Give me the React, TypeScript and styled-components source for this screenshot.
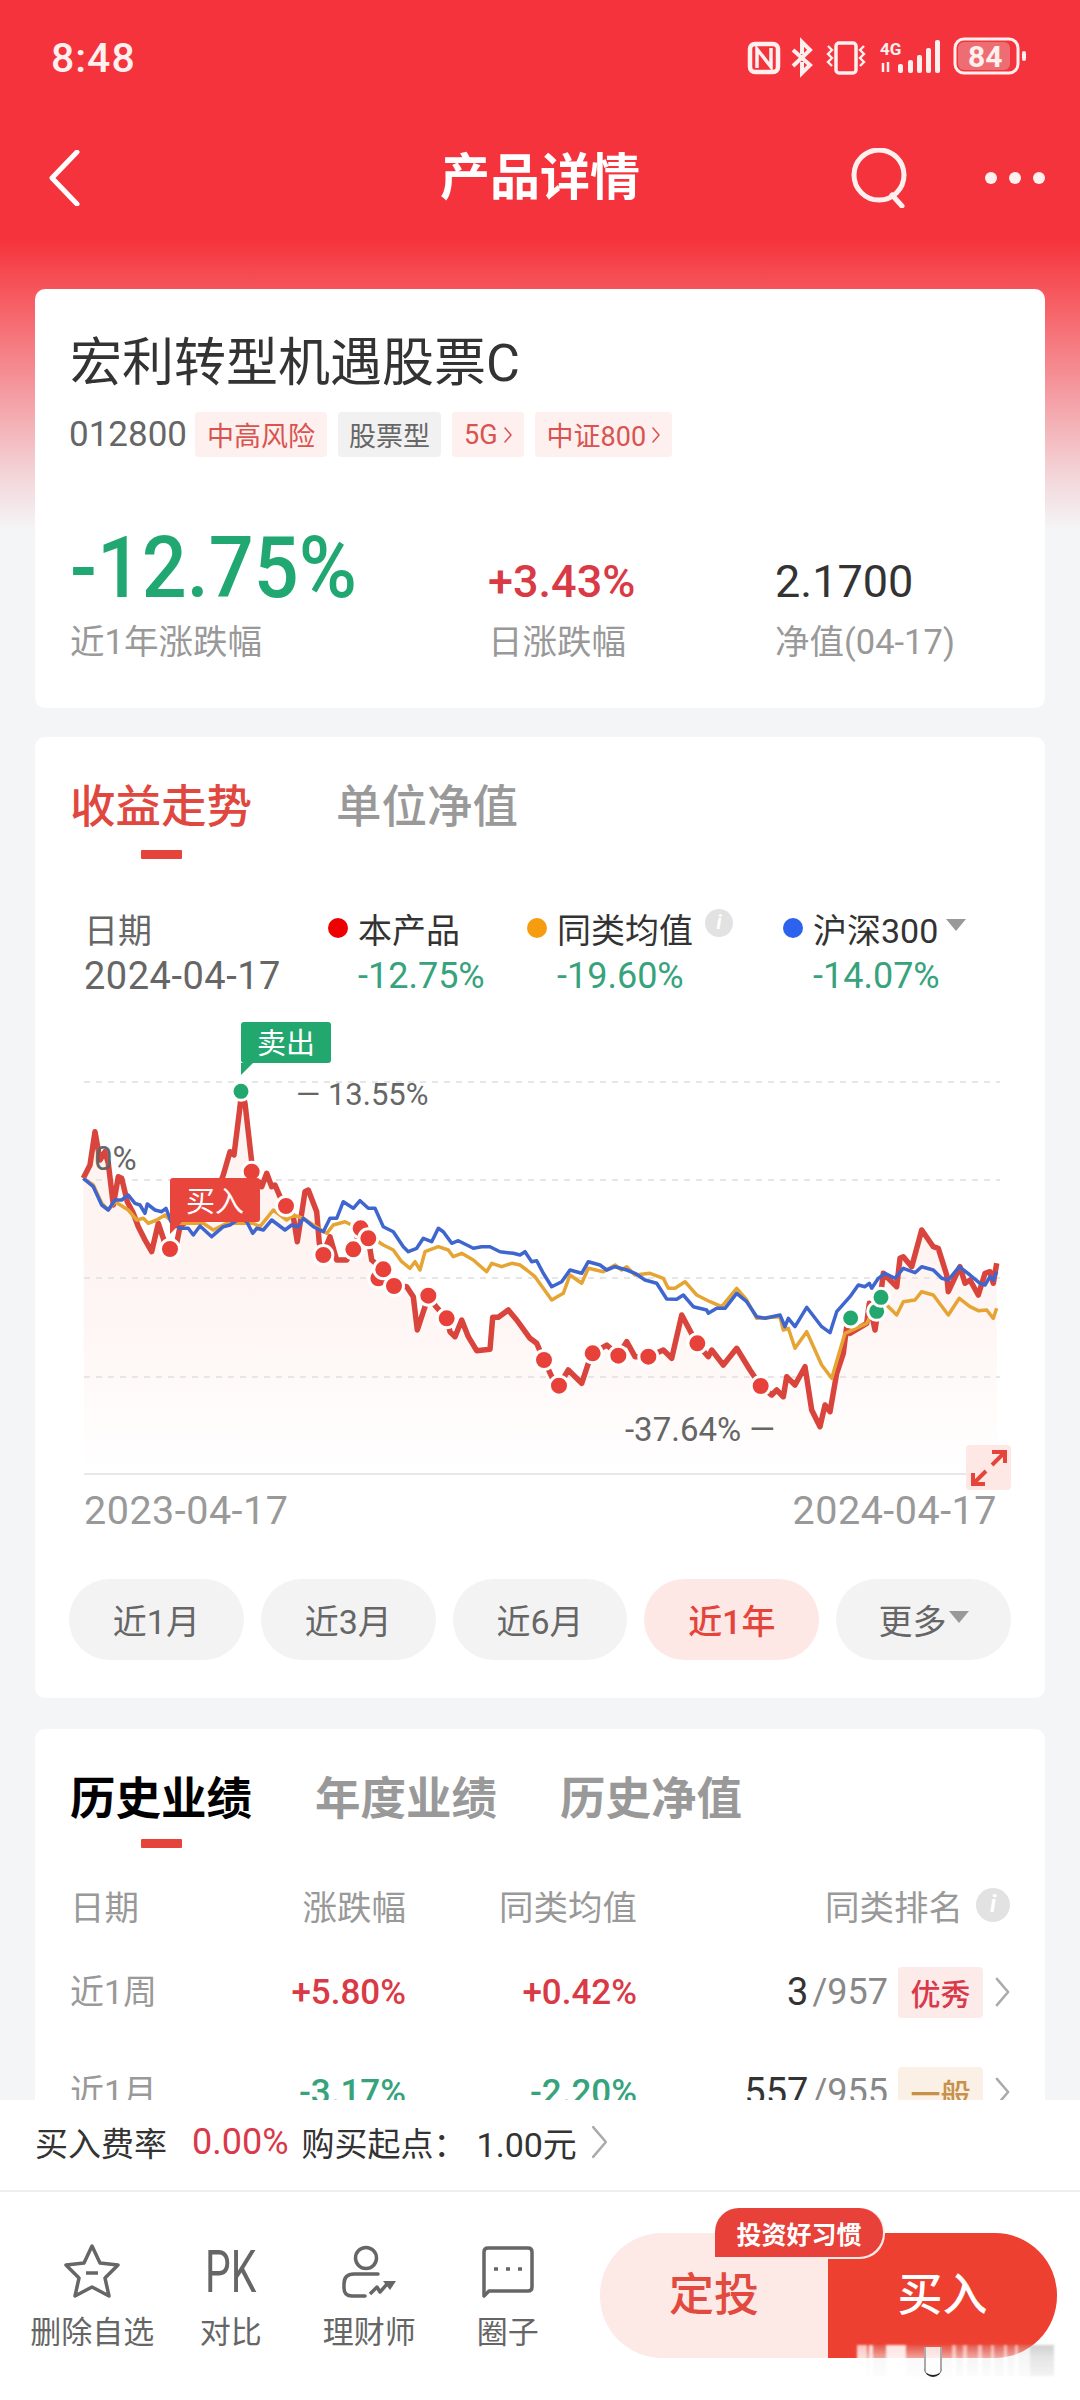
import React from "react";
import styled, { createGlobalStyle } from "styled-components";

type P = [number, number];
const z2 = (a: P[]): P[] => a.map(([x, y]) => [40 + x / 3, 880 + y / 3]);
const z3 = (a: P[]): P[] => a.map(([x, y]) => [520 + x / 3, 1100 + y / 3]);
const z4 = (a: P[]): P[] => a.map(([x, y]) => [410 + x / 3, 1230 + y / 3]);
const line = (a: P[]) => a.map((p, i) => `${i ? "L" : "M"}${p[0].toFixed(1)} ${p[1].toFixed(1)}`).join(" ");

const redPts: P[] = [
  ...z2([[130,895],[150,855],[165,755],[180,840],[195,815],[205,850],[220,975],[235,890],[245,895],[262,965],[280,1000],[295,1040],[315,1080],[335,1115],[355,1030],[375,1090],[390,1105],[410,1090],[420,1040],[470,1000],[520,960],[550,885],[570,815],[582,825],[600,680],[605,630],[615,670],[635,845],[640,880],[665,920],[680,880],[695,920],[705,915],[720,950],[738,975],[760,1010],[772,1085],[795,935],[805,930],[830,995],[838,1090],[850,1120],[870,1070],[890,1140],[920,1140],[940,1110],[960,1045],[985,1075],[995,1140],[1030,1170],[1015,1195],[1060,1215],[1100,1220]]),
  ...z4([[10,200],[22,300],[45,230],[55,197],[78,230],[110,265],[120,305],[135,320],[155,270],[175,320],[200,362],[240,358],[248,262],[265,262],[295,240],[320,270]]),
  ...z3([[30,715],[50,730],[72,780],[95,830],[117,857],[145,810],[185,850],[205,790],[218,760],[260,735],[295,765],[320,725],[345,770],[385,770],[430,750],[455,775],[485,645],[530,730],[565,770],[575,750],[610,795],[650,745],[690,810],[722,858],[755,885],[770,870],[790,890],[800,830],[825,855],[855,800],[875,930],[900,980],[915,915],[930,935],[950,820],[970,760],[980,680],[990,700],[1040,670],[1048,610],[1065,690],[1085,560],[1090,520],[1130,560],[1140,475],[1150,470],[1175,500],[1205,390],[1240,440],[1255,445],[1280,525],[1285,575],[1320,500],[1335,550],[1350,540],[1375,585],[1395,520],[1410,515],[1420,550],[1430,490]]),
];
const bluePts: P[] = [
  ...z2([[130,895],[160,920],[185,975],[205,990],[225,960],[245,960],[265,945],[285,970],[300,975],[315,1000],[322,972],[345,990],[365,995],[378,985],[395,1030],[420,1045],[445,1045],[460,1065],[480,1038],[515,1070],[550,1040],[570,1035],[600,1015],[620,1025],[638,1060],[650,1045],[670,1050],[695,1020],[735,1050],[755,1035],[775,1040],[790,1015],[820,1040],[850,1055],[870,1015],[890,1015],[910,965],[940,985],[960,962],[985,985],[1005,985],[1030,1040],[1060,1055],[1090,1100],[1105,1115],[1130,1105],[1150,1075],[1175,1085],[1195,1045],[1210,1055],[1235,1090],[1255,1082],[1300,1105],[1325,1100],[1350,1100],[1380,1115],[1420,1120]]),
  ...z3([[0,465],[15,455],[35,485],[50,482],[70,520],[95,560],[125,545],[150,510],[185,520],[205,485],[240,495],[260,510],[285,500],[320,510],[345,520],[375,540],[410,550],[440,597],[470,598],[490,585],[520,620],[560,630],[565,640],[590,625],[615,625],[650,580],[680,605],[710,650],[735,655],[780,645],[795,680],[805,655],[825,680],[860,622],[905,680],[930,698],[950,635],[990,590],[1015,555],[1035,560],[1048,550],[1055,565],[1075,535],[1095,520],[1125,535],[1150,505],[1185,518],[1205,500],[1240,510],[1265,535],[1285,540],[1318,500],[1350,525],[1380,550],[1395,555],[1410,530],[1420,540],[1430,515]]),
];
const orangePts: P[] = [
  ...z2([[130,895],[160,915],[185,970],[205,990],[225,965],[265,990],[290,1020],[310,1015],[325,1030],[350,1020],[375,1005],[400,1030],[440,1030],[490,1030],[520,1050],[560,1030],[600,1030],[640,1030],[660,1040],[700,990],[740,1020],[760,1005],[790,1015],[835,1045],[860,1060],[880,1035],[915,1025],[945,1040],[985,1065],[1030,1095],[1060,1110],[1085,1145],[1110,1165],[1125,1145],[1140,1170],[1155,1115],[1195,1100],[1225,1110],[1240,1130],[1265,1120],[1300,1140],[1340,1175],[1355,1150],[1385,1160],[1415,1150]]),
  ...z3([[0,495],[20,510],[45,530],[95,600],[130,580],[150,525],[185,550],[205,505],[250,515],[285,495],[305,510],[320,500],[345,525],[390,520],[430,535],[445,565],[465,565],[495,545],[530,585],[570,605],[605,620],[650,565],[680,600],[710,655],[780,650],[790,690],[805,685],[825,745],[860,695],[905,795],[935,835],[975,700],[1040,670],[1055,640],[1085,600],[1130,645],[1150,605],[1185,600],[1205,575],[1240,585],[1285,645],[1318,595],[1350,620],[1375,632],[1400,630],[1420,655],[1430,625]]),
];
const redDots: P[] = [
  ...z2([[390,1107],[635,875],[738,978],[850,1125],[940,1108],[962,1045],[985,1075],[1015,1195],[1030,1168],[1062,1218]]),
  ...z4([[55,197],[110,265]]),
  ...z3([[72,780],[117,857],[218,760],[295,767],[385,770],[532,730],[722,858]]),
];
const greenDots: P[] = [...z2([[603,634]]), ...z3([[992,654],[1070,634],[1083,592]])];
const grid = [1082, 1180, 1278, 1377];

const Global = createGlobalStyle`
  html, body { margin: 0; padding: 0; background: #f4f5f7; }
  * { box-sizing: border-box; }
  body { font-family: Roboto, "Noto Sans CJK SC", sans-serif; }
`;
const Page = styled.div`
  width: 1080px; height: 2400px; display: flex; flex-direction: column; overflow: hidden; position: relative;
  background: linear-gradient(180deg, #f5333c 0, #f5333c 240px, #f6565c 290px, #f4a0a6 400px, #f3d5d8 475px, #f4f5f7 530px);
`;
const Scroll = styled.div`flex: 1; min-height: 0; overflow: hidden;`;
const StatusBar = styled.div`
  height: 116px; display: flex; align-items: center; justify-content: space-between; padding: 0 54px 0 51px; color: #fff;
`;
const Clock = styled.span`font-size: 41px; font-weight: 500; color: #fdf0ee; letter-spacing: 1px;`;
const StatusIcons = styled.svg`width: 282px; height: 44px; display: block;`;
const Nav = styled.div`
  height: 122px; padding: 2px 35px 0 48px; display: flex; align-items: center; justify-content: space-between; position: relative;
`;
const NavTitle = styled.h1`
  position: absolute; left: 0; right: 0; top: 0; margin: 0; text-align: center; line-height: 125px; font-size: 50px; font-weight: 700; color: #fff;
`;
const NavRight = styled.div`display: flex; align-items: center; gap: 73px;`;
const Main = styled.main`padding: 51px 35px 0; display: flex; flex-direction: column; gap: 29px;`;
const Card = styled.section`background: #fff; border-radius: 10px;`;
const InfoCard = styled(Card)`height: 419px; padding: 45px 35px 0;`;
const FundName = styled.h2`margin: 0; font-size: 52px; line-height: 60px; font-weight: 400; color: #333;`;
const CodeRow = styled.div`margin-top: 18px; height: 45px; display: flex; align-items: center; gap: 11px;`;
const Code = styled.span`font-size: 35px; color: #666; width: 115px; margin-left: -1px;`;
const Tag = styled.span<{ $gray?: boolean }>`
  height: 45px; padding: 0 ${(p) => (p.$gray ? 11 : 12)}px; display: inline-flex; align-items: center; gap: 6px; border-radius: 4px; font-size: 27px;
  background: ${(p) => (p.$gray ? "#f1f1f1" : "#fdf0ee")}; color: ${(p) => (p.$gray ? "#666" : "#d9534f")};
`;
const Metrics = styled.div`
  margin-top: 66px; display: grid; grid-template-columns: 418px 287px 1fr; align-items: baseline;
`;
const BigVal = styled.span`
  font-size: 86px; font-weight: 500; color: #21a872; line-height: 90px; display: inline-block; transform: scaleX(0.92); transform-origin: left center;
`;
const MidVal = styled.span<{ $dark?: boolean }>`
  font-size: 45px; color: ${(p) => (p.$dark ? "#333" : "#d93a45")}; font-weight: ${(p) => (p.$dark ? 400 : 500)}; line-height: 90px;
`;
const MetricLabel = styled.span`font-size: 34.5px; color: #999; line-height: 44px; margin-top: -7px;`;
const TrendCard = styled(Card)`padding-top: 41px; height: 961px;`;
const Tabs = styled.div<{ $gap: number }>`display: flex; gap: ${(p) => p.$gap}px; padding-left: 35px;`;
const TabItem = styled.div`display: flex; flex-direction: column; align-items: center;`;
const TabText = styled.span<{ $c: string; $b?: boolean }>`
  font-size: 45.5px; line-height: 60px; color: ${(p) => p.$c}; font-weight: ${(p) => (p.$b ? 700 : 500)};
`;
const TabBar = styled.span<{ $gap: number }>`
  width: 41px; height: 9px; margin-top: ${(p) => p.$gap}px; background: #e5443b; border-radius: 1px;
`;
const Legend = styled.div`display: flex; margin-top: 45px; padding-left: 49px;`;
const LegendCol = styled.div<{ $w: number }>`width: ${(p) => p.$w}px; flex: none;`;
const LegendTop = styled.div`height: 48px; display: flex; align-items: center; gap: 10px; font-size: 34px; color: #333; white-space: nowrap;`;
const DateHead = styled(LegendTop)`color: #666;`;
const DateVal = styled.div`height: 48px; line-height: 48px; font-size: 38px; letter-spacing: 0.5px; color: #666; white-space: nowrap;`;
const Dot = styled.span<{ $c: string }>`width: 20px; height: 20px; border-radius: 50%; background: ${(p) => p.$c}; flex: none;`;
const LegendVal = styled.div`height: 48px; line-height: 48px; font-size: 36px; color: #37a37d; padding-left: 30px; white-space: nowrap;`;
const InfoDot = styled.span<{ $s: number }>`
  width: ${(p) => p.$s}px; height: ${(p) => p.$s}px; border-radius: 50%; background: #e2e2e2; color: #fff; font-size: ${(p) => p.$s * 0.7}px;
  font-weight: 700; font-style: italic; display: inline-flex; align-items: center; justify-content: center; flex: none; line-height: 1;
`;
const RaisedInfo = styled(InfoDot)`margin: -10px 0 0 2px;`;
const Caret = styled.span`
  width: 0; height: 0; border-left: 10px solid transparent; border-right: 10px solid transparent; border-top: 12px solid #999; margin: -6px 0 0 -2px; flex: none;
`;
const ChartWrap = styled.div`position: relative; height: 480px; margin-top: 10px;`;
const ChartSvg = styled.svg`display: block; width: 1010px; height: 480px;`;
const Flag = styled.div<{ $c: string }>`
  position: absolute; width: 90px; color: #fff; font-size: 29px; display: flex; align-items: center; justify-content: center;
  background: ${(p) => p.$c}; border-radius: 3px;
  &::after { content: ""; position: absolute; left: 0; top: 100%; border-top: 12px solid ${(p) => p.$c}; border-right: 12px solid transparent; }
`;
const SellFlag = styled(Flag)`left: 206px; top: 12px; height: 41px; padding-bottom: 3px;`;
const BuyFlag = styled(Flag)`left: 135px; top: 168px; height: 44px; padding-bottom: 3px;`;
const ChartNote = styled.span`position: absolute; font-size: 31px; color: #666; white-space: nowrap; line-height: 36px;`;
const NotePeak = styled(ChartNote)`left: 261px; top: 67px;`;
const NoteZero = styled(ChartNote)`left: 59px; top: 131px; font-size: 33px;`;
const NoteLow = styled(ChartNote)`left: 590px; top: 402px; font-size: 33px;`;
const Expand = styled.div`
  position: absolute; left: 931px; top: 435px; width: 45px; height: 45px; background: #fde8e6; border-radius: 4px;
  display: flex; align-items: center; justify-content: center;
`;
const AxisDates = styled.div`height: 40px; padding: 0 48px 0 49px; display: flex; justify-content: space-between; align-items: center; font-size: 39.5px; letter-spacing: 0.5px; color: #999;`;
const Pills = styled.div`display: flex; gap: 17px; padding: 0 34px; margin-top: 49px;`;
const Pill = styled.div<{ $on?: boolean }>`
  width: 175px; height: 81px; border-radius: 41px; display: flex; align-items: center; justify-content: center; gap: 4px; font-size: 34px;
  background: ${(p) => (p.$on ? "#fde8e6" : "#f3f3f3")}; color: ${(p) => (p.$on ? "#e5443b" : "#666")}; font-weight: ${(p) => (p.$on ? 500 : 400)};
`;
const HistoryCard = styled(Card)`padding-top: 41px; height: 500px; margin-top: 2px;`;
const Table = styled.div`padding: 32px 35px 0;`;
const Row = styled.div<{ $h: number }>`
  display: grid; grid-template-columns: 140px 196px 231px 1fr; align-items: center; height: ${(p) => p.$h}px;
`;
const HeadCell = styled.span`font-size: 34.5px; color: #999; white-space: nowrap; justify-self: end;`;
const HeadFirst = styled(HeadCell)`justify-self: start;`;
const RankHead = styled.div`justify-self: end; display: flex; align-items: center; gap: 13px; font-size: 34.5px; color: #999;`;
const RowLabel = styled.span`font-size: 34px; color: #999; white-space: nowrap; padding-bottom: 6px;`;
const Pct = styled.span<{ $up?: boolean }>`
  justify-self: end; font-size: 35px; font-weight: 500; color: ${(p) => (p.$up ? "#d93a45" : "#37a37d")}; white-space: nowrap;
`;
const RankCell = styled.div`justify-self: end; display: flex; align-items: center;`;
const Rank = styled.span`font-size: 38px; color: #333;`;
const RankOf = styled.span`font-size: 36px; color: #888; padding-left: 4px;`;
const Badge = styled.span<{ $warm?: boolean }>`
  width: 85px; height: 51px; margin: 0 12px 0 10px; border-radius: 4px; display: flex; align-items: center; justify-content: center; font-size: 30px; font-weight: 500;
  background: ${(p) => (p.$warm ? "#faf0e6" : "#fcebe9")}; color: ${(p) => (p.$warm ? "#c8914a" : "#d9394a")};
`;
const Footer = styled.footer`height: 300px; flex: none; background: #fff; position: relative;`;
const FeeRow = styled.div`
  height: 92px; border-bottom: 2px solid #eeeeee; padding: 0 35px 6px; display: flex; align-items: center; font-size: 33px; color: #333; white-space: nowrap;
`;
const FeeRate = styled.span`font-size: 36px; color: #d9394a; margin: 0 13px 0 25px;`;
const FeeStart = styled.span`margin-right: 10px;`;
const FeeAmount = styled.span`font-size: 34px; margin-right: 14px;`;
const Bottom = styled.div`display: flex; align-items: flex-start;`;
const Actions = styled.div`display: flex; padding: 52px 0 0 23px; width: 600px;`;
const Action = styled.div`width: 138.5px; display: flex; flex-direction: column; align-items: center; color: #666;`;
const ActionIcon = styled.svg`display: block; width: 70px; height: 56px;`;
const PkBox = styled.div`height: 56px; display: flex; align-items: center; justify-content: center;`;
const PkText = styled.span`font-size: 60px; font-weight: 400; color: #666; line-height: 56px; display: inline-block; transform: scaleX(0.68);`;
const ActionLabel = styled.span`margin-top: 15px; font-size: 31px; line-height: 36px; white-space: nowrap;`;
const Buttons = styled.div`
  position: relative; width: 457px; height: 125px; margin-top: 41px; display: flex; border-radius: 62px;
`;
const PlanBtn = styled.div`
  width: 228px; background: #fde9e6; color: #e2493f; font-size: 45px; font-weight: 500; display: flex; align-items: center; justify-content: center;
  border-radius: 62px 0 0 62px; padding-bottom: 8px;
`;
const BuyBtn = styled.div`
  flex: 1; background: #ee4030; color: #fff; font-size: 45px; font-weight: 500; display: flex; align-items: center; justify-content: center;
  border-radius: 0 62px 62px 0; padding-bottom: 8px;
`;
const Habit = styled.div`
  position: absolute; left: 115px; top: -25px; width: 168px; height: 49px; background: #e8413a; color: #fff; font-size: 25px; font-weight: 700;
  display: flex; align-items: center; justify-content: center; border-radius: 24px 24px 24px 0; box-shadow: 1px 1px 0 1px #fde9e6;
`;
const Watermark = styled.div`
  position: absolute; left: 857px; top: 245px; width: 197px; height: 31px; filter: blur(1px);
  background:
    linear-gradient(180deg, rgba(255,255,255,0) 0, rgba(255,255,255,.45) 40%, rgba(255,255,255,.75) 100%),
    linear-gradient(90deg,
      rgba(255,255,255,.7) 0 10px, rgba(190,190,190,.2) 10px 12px, rgba(255,255,255,.8) 12px 16px, rgba(190,190,190,.2) 16px 29px,
      rgba(255,255,255,.85) 29px 49px, rgba(190,190,190,.15) 49px 95px,
      rgba(255,255,255,.6) 95px 99px, rgba(190,190,190,.25) 99px 106px, rgba(255,255,255,.6) 106px 110px, rgba(190,190,190,.25) 110px 121px,
      rgba(255,255,255,.6) 121px 125px, rgba(190,190,190,.25) 125px 134px, rgba(255,255,255,.6) 134px 137px, rgba(190,190,190,.25) 137px 147px,
      rgba(255,255,255,.6) 147px 150px, rgba(190,190,190,.25) 150px 158px, rgba(255,255,255,.6) 158px 161px, rgba(190,190,190,.25) 161px 173px,
      rgba(170,170,170,.55) 173px 197px);
`;
const WatermarkBar = styled.div`
  position: absolute; left: 924px; top: 247px; width: 18px; height: 30px; border-bottom: 2px solid #222; border-radius: 0 0 9px 9px;
  background: linear-gradient(90deg, #aaa 0 2px, rgba(255,255,255,.8) 2px 16px, #aaa 16px 18px);
`;
const Chevron = ({ s = 16, c = "#aaa", w = 2.5 }: { s?: number; c?: string; w?: number }) => (
  <svg width={s} height={s * 2} viewBox="0 0 16 32" fill="none"><path d="M2 2 L14 16 L2 30" stroke={c} strokeWidth={w * (16 / s)} strokeLinecap="round" strokeLinejoin="round" /></svg>
);

export default function App() {
  return (
    <Page>
      <Global />
      <Scroll>
        <StatusBar>
          <Clock>8:48</Clock>
          <StatusIcons viewBox="742 36 282 44" fill="none">
            <rect x="748" y="44" width="28" height="28" rx="5" stroke="#fdf0ee" strokeWidth="4.5" />
            <path d="M755 68 V49 L769 67 V48" stroke="#fdf0ee" strokeWidth="3.5" />
            <path d="M791 50 L808 65 L800 73 V62 M800 54 V42 L808 50 L791 66" stroke="#fdf0ee" strokeWidth="4" />
            <rect x="834" y="43" width="20" height="30" rx="3" stroke="#fdf0ee" strokeWidth="3.5" />
            <path d="M826 46 l4 4 -4 4 4 4 -4 4 4 4 M862 46 l-4 4 4 4 -4 4 4 4 -4 4" stroke="#fdf0ee" strokeWidth="2.4" />
            <text x="878" y="55" fontSize="17" fontWeight="700" fill="#fdf0ee" fontFamily="Roboto, sans-serif">4G</text>
            <path d="M881 63 V72 M886 62 V72" stroke="#fdf0ee" strokeWidth="2.5" />
            <rect x="896" y="64" width="5" height="9" rx="2" fill="#fdf0ee" />
            <rect x="906" y="60" width="5" height="13" rx="2" fill="#fdf0ee" />
            <rect x="915" y="55" width="5" height="18" rx="2" fill="#fdf0ee" />
            <rect x="924" y="48" width="5" height="25" rx="2" fill="#fdf0ee" />
            <rect x="933" y="40" width="5" height="33" rx="2" fill="#fdf0ee" />
            <rect x="953" y="39" width="63" height="34" rx="9" stroke="#fdf0ee" strokeWidth="3" />
            <rect x="956" y="42" width="52" height="28" rx="6" fill="#ee6d72" />
            <text x="966" y="67" fontSize="30" fontWeight="700" fill="#fdf0ee" fontFamily="Roboto, sans-serif">84</text>
            <rect x="1020" y="51" width="4" height="10" rx="2" fill="#fdf0ee" />
          </StatusIcons>
        </StatusBar>
        <Nav>
          <svg width="32" height="56" viewBox="0 0 32 56" fill="none"><path d="M29 2 L4 28 L29 54" stroke="#fff" strokeWidth="5" strokeLinejoin="round" strokeLinecap="round" /></svg>
          <NavTitle>产品详情</NavTitle>
          <NavRight>
            <svg width="62" height="60" viewBox="0 0 62 60" fill="none"><circle cx="29" cy="27" r="25" stroke="#fdf0ee" strokeWidth="5" /><path d="M42 47 L52 58" stroke="#fdf0ee" strokeWidth="5" strokeLinecap="round" /></svg>
            <svg width="60" height="14" viewBox="0 0 60 14" fill="#fdf0ee"><circle cx="6" cy="7" r="6" /><circle cx="30" cy="7" r="6" /><circle cx="54" cy="7" r="6" /></svg>
          </NavRight>
        </Nav>
        <Main>
          <InfoCard>
            <FundName>宏利转型机遇股票C</FundName>
            <CodeRow>
              <Code>012800</Code>
              <Tag>中高风险</Tag>
              <Tag $gray>股票型</Tag>
              <Tag>5G<Chevron s={8} c="#d9534f" w={1.5} /></Tag>
              <Tag>中证800<Chevron s={8} c="#d9534f" w={1.5} /></Tag>
            </CodeRow>
            <Metrics>
              <BigVal>-12.75%</BigVal>
              <MidVal>+3.43%</MidVal>
              <MidVal $dark>2.1700</MidVal>
              <MetricLabel>近1年涨跌幅</MetricLabel>
              <MetricLabel>日涨跌幅</MetricLabel>
              <MetricLabel>净值(04-17)</MetricLabel>
            </Metrics>
          </InfoCard>
          <TrendCard>
            <Tabs $gap={84}>
              <TabItem>
                <TabText $c="#e0473e">收益走势</TabText>
                <TabBar $gap={12} />
              </TabItem>
              <TabItem>
                <TabText $c="#999">单位净值</TabText>
              </TabItem>
            </Tabs>
            <Legend>
              <LegendCol $w={244}>
                <DateHead>日期</DateHead>
                <DateVal>2024-04-17</DateVal>
              </LegendCol>
              <LegendCol $w={199}>
                <LegendTop><Dot $c="#ee0000" />本产品</LegendTop>
                <LegendVal>-12.75%</LegendVal>
              </LegendCol>
              <LegendCol $w={256}>
                <LegendTop><Dot $c="#f59d0e" />同类均值<RaisedInfo $s={28}>i</RaisedInfo></LegendTop>
                <LegendVal>-19.60%</LegendVal>
              </LegendCol>
              <LegendCol $w={220}>
                <LegendTop><Dot $c="#2c62ee" />沪深300<Caret /></LegendTop>
                <LegendVal>-14.07%</LegendVal>
              </LegendCol>
            </Legend>
            <ChartWrap>
              <ChartSvg viewBox="35 1010 1010 480" fill="none">
                <defs>
                  <linearGradient id="area" x1="0" y1="1040" x2="0" y2="1474" gradientUnits="userSpaceOnUse">
                    <stop offset="0" stopColor="#fdf2f0" />
                    <stop offset="0.65" stopColor="#fef6f4" />
                    <stop offset="1" stopColor="#ffffff" />
                  </linearGradient>
                </defs>
                <path d={`${line(redPts)} L997 1474 L84 1474 Z`} fill="url(#area)" />
                {grid.map((y) => (
                  <path key={y} d={`M84 ${y} H1000`} stroke="#e6e6e6" strokeWidth="2" strokeDasharray="6 6" />
                ))}
                <path d="M84 1474 H966" stroke="#e8e8e8" strokeWidth="2" />
                <path d={line(redPts)} stroke="#d9453c" strokeWidth="5.5" strokeLinejoin="round" />
                <path d={line(orangePts)} stroke="#e5a433" strokeWidth="3.5" strokeLinejoin="round" />
                <path d={line(bluePts)} stroke="#3f66cf" strokeWidth="3.5" strokeLinejoin="round" />
                {redDots.map(([x, y], i) => (
                  <circle key={i} cx={x} cy={y} r="9.5" fill="#e8413a" stroke="#fff" strokeWidth="3" />
                ))}
                {greenDots.map(([x, y], i) => (
                  <circle key={i} cx={x} cy={y} r="9" fill="#22a86e" stroke="#fff" strokeWidth="3" />
                ))}
              </ChartSvg>
              <SellFlag $c="#22a86e">卖出</SellFlag>
              <BuyFlag $c="#e8453c">买入</BuyFlag>
              <NotePeak>— 13.55%</NotePeak>
              <NoteZero>0%</NoteZero>
              <NoteLow>-37.64% —</NoteLow>
              <Expand>
                <svg width="38" height="38" viewBox="0 0 38 38" fill="none" stroke="#e5443b" strokeWidth="4"><path d="M22 16 L35 3 M22 3 H35 V14 M16 22 L3 35 M3 24 V35 H15" /></svg>
              </Expand>
            </ChartWrap>
            <AxisDates><span>2023-04-17</span><span>2024-04-17</span></AxisDates>
            <Pills>
              <Pill>近1月</Pill>
              <Pill>近3月</Pill>
              <Pill>近6月</Pill>
              <Pill $on>近1年</Pill>
              <Pill>更多<Caret /></Pill>
            </Pills>
          </TrendCard>
          <HistoryCard>
            <Tabs $gap={63}>
              <TabItem>
                <TabText $c="#000" $b>历史业绩</TabText>
                <TabBar $gap={9} />
              </TabItem>
              <TabItem>
                <TabText $c="#999" $b>年度业绩</TabText>
              </TabItem>
              <TabItem>
                <TabText $c="#999" $b>历史净值</TabText>
              </TabItem>
            </Tabs>
            <Table>
              <Row $h={44}>
                <HeadFirst>日期</HeadFirst>
                <HeadCell>涨跌幅</HeadCell>
                <HeadCell>同类均值</HeadCell>
                <RankHead>同类排名<InfoDot $s={34}>i</InfoDot></RankHead>
              </Row>
              <Row $h={136}>
                <RowLabel>近1周</RowLabel>
                <Pct $up>+5.80%</Pct>
                <Pct $up>+0.42%</Pct>
                <RankCell><Rank>3</Rank><RankOf>/957</RankOf><Badge>优秀</Badge><Chevron s={15} /></RankCell>
              </Row>
              <Row $h={64}>
                <RowLabel>近1月</RowLabel>
                <Pct>-3.17%</Pct>
                <Pct>-2.20%</Pct>
                <RankCell><Rank>557</Rank><RankOf>/955</RankOf><Badge $warm>一般</Badge><Chevron s={15} /></RankCell>
              </Row>
            </Table>
          </HistoryCard>
        </Main>
      </Scroll>
      <Footer>
        <FeeRow>
          买入费率<FeeRate>0.00%</FeeRate><FeeStart>购买起点：</FeeStart><FeeAmount>1.00元</FeeAmount><Chevron s={17} />
        </FeeRow>
        <Bottom>
          <Actions>
            <Action>
              <ActionIcon viewBox="57 2244 70 56" fill="none" stroke="#666" strokeWidth="3.5" strokeLinejoin="round">
                <path d="M92 2246 L100 2263 L118 2265 L105 2278 L109 2296 L92 2287 L75 2296 L79 2278 L66 2265 L84 2263 Z" />
                <path d="M86 2273 H98" />
              </ActionIcon>
              <ActionLabel>删除自选</ActionLabel>
            </Action>
            <Action>
              <PkBox><PkText>PK</PkText></PkBox>
              <ActionLabel>对比</ActionLabel>
            </Action>
            <Action>
              <ActionIcon viewBox="334 2244 70 56" fill="none" stroke="#666" strokeWidth="3.5" strokeLinejoin="round">
                <circle cx="366" cy="2258" r="10.5" />
                <path d="M378 2274 H354 Q344 2274 344 2284 V2288 Q344 2296 352 2296 H365" strokeLinecap="round" />
                <path d="M370 2294 L377 2287 L380 2292 L388 2283" />
                <path d="M383 2281 H396 L390 2290 Z" fill="#666" stroke="none" />
              </ActionIcon>
              <ActionLabel>理财师</ActionLabel>
            </Action>
            <Action>
              <ActionIcon viewBox="472 2244 70 56" fill="none" stroke="#666" strokeWidth="3.5" strokeLinejoin="round">
                <path d="M483 2296 V2252 Q483 2248 487 2248 H527 Q531 2248 531 2252 V2287 Q531 2291 527 2291 H488 Z" />
                <path d="M493 2269 h4 M505 2269 h4 M517 2269 h4" />
              </ActionIcon>
              <ActionLabel>圈子</ActionLabel>
            </Action>
          </Actions>
          <Buttons>
            <PlanBtn>定投</PlanBtn>
            <BuyBtn>买入</BuyBtn>
            <Habit>投资好习惯</Habit>
          </Buttons>
        </Bottom>
        <Watermark />
        <WatermarkBar />
      </Footer>
    </Page>
  );
}
